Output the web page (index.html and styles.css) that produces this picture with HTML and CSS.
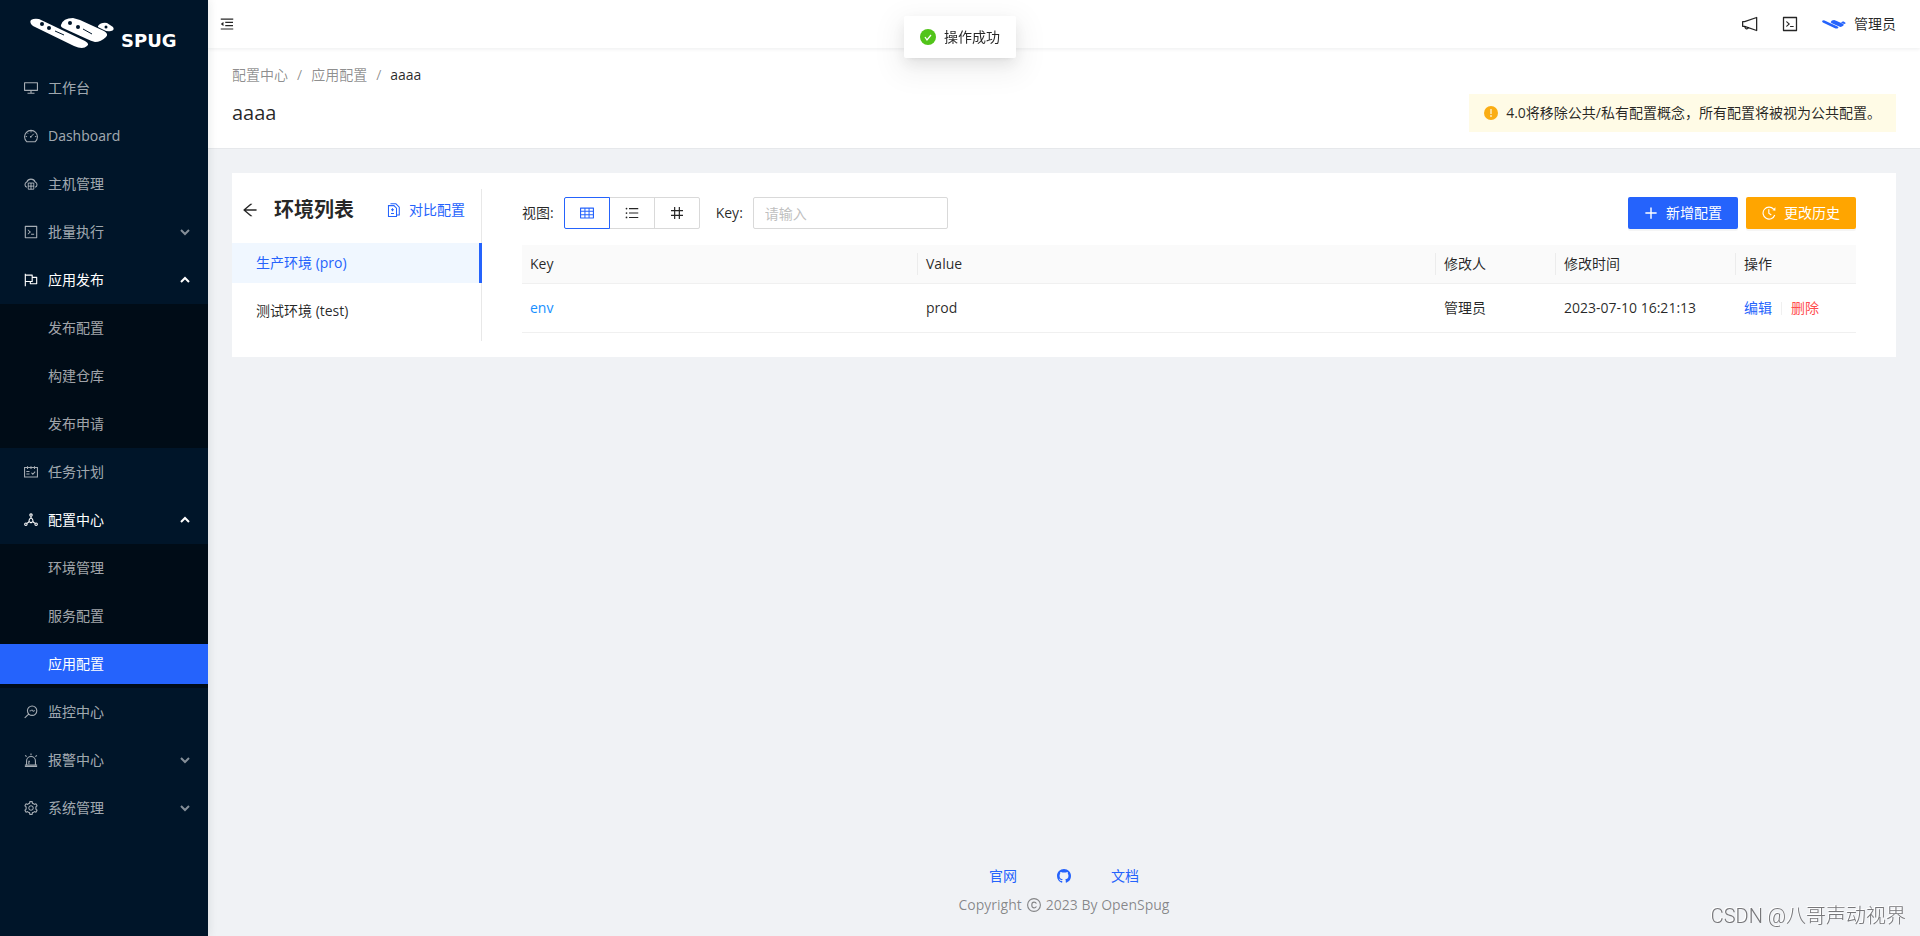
FILE: index.html
```html
<!DOCTYPE html>
<html lang="zh-CN">
<head>
<meta charset="utf-8">
<title>Spug</title>
<link rel="stylesheet" href="styles.css">
</head>
<body>
<svg class="defs" aria-hidden="true">
  <symbol id="fold" viewBox="64 64 896 896"><path d="M400 370h496v72H400zM400 582h496v72H400zM112 160h800v72H112zM112 792h800v72H112zM115 519l157 123c6 4 14 0 14-7V389c0-7-8-12-14-7L115 505a9 9 0 000 14z"/></symbol>
  <symbol id="desktop" viewBox="64 64 896 896"><path d="M928 140H96c-17.700 0-32 14.300-32 32v496c0 17.700 14.300 32 32 32h380v112H304c-8.800 0-16 7.200-16 16v48c0 4.400 3.600 8 8 8h432c4.400 0 8-3.600 8-8v-48c0-8.800-7.200-16-16-16H548V700h380c17.700 0 32-14.300 32-32V172c0-17.700-14.300-32-32-32zm-40 488H136V212h752v416z"/></symbol>
  <symbol id="dashboard" viewBox="64 64 896 896"><g fill="none" stroke="currentColor" stroke-width="68"><path d="M232 866A412 412 0 1 1 792 866Q780 880 760 880H264Q244 880 232 866Z"/><path d="M512 196v90M262 300l58 58M170 548h90M764 548h90M500 560l190-190" stroke-width="60"/></g><circle cx="498" cy="562" r="56"/></symbol>
  <symbol id="cloud" viewBox="64 64 896 896"><g fill="none" stroke="currentColor" stroke-width="68"><path d="M248 724A180 180 0 0 1 244 386A286 286 0 0 1 780 386A180 180 0 0 1 776 724"/><path d="M334 450h356v396H334zM334 648h356M512 450v396" stroke-width="60"/></g></symbol>
  <symbol id="code" viewBox="64 64 896 896"><path d="M516 673c0 4.400 3.400 8 7.500 8h185c4.100 0 7.500-3.600 7.500-8v-48c0-4.400-3.400-8-7.500-8h-185c-4.100 0-7.500 3.600-7.500 8v48zm-194.900 6.100l192-161c3.800-3.200 3.800-9.100 0-12.300l-192-160.900A7.950 7.950 0 00308 351v62.700c0 2.400 1 4.600 2.900 6.100L420.700 512l-109.800 92.200a8.100 8.100 0 00-2.900 6.100V673c0 6.800 7.900 10.500 13.100 6.100zM880 112H144c-17.700 0-32 14.300-32 32v736c0 17.700 14.300 32 32 32h736c17.700 0 32-14.300 32-32V144c0-17.700-14.300-32-32-32zm-40 728H184V184h656v656z"/></symbol>
  <symbol id="flag" viewBox="64 64 896 896"><path d="M880 305H624V192c0-17.700-14.300-32-32-32H184v-40c0-4.400-3.600-8-8-8h-56c-4.400 0-8 3.600-8 8v784c0 4.400 3.600 8 8 8h56c4.400 0 8-3.600 8-8V640h248v113c0 17.700 14.300 32 32 32h416c17.700 0 32-14.300 32-32V337c0-17.700-14.300-32-32-32zM184 568V232h368v336H184zm656 145H504v-73h112c4.400 0 8-3.600 8-8V377h216v336z"/></symbol>
  <symbol id="schedule" viewBox="64 64 896 896"><g fill="none" stroke="currentColor" stroke-width="68"><path d="M100 228h824v600H100zM288 136v180M512 136v180M736 136v180"/><path d="M216 482h200M216 636h200M540 560l88 96 150-170" stroke-width="68"/></g></symbol>
  <symbol id="deploy" viewBox="64 64 896 896"><g fill="none" stroke="currentColor" stroke-width="70"><circle cx="512" cy="196" r="78"/><circle cx="184" cy="786" r="78"/><circle cx="840" cy="786" r="78"/><path d="M512 274v100M512 374Q380 450 376 610L512 690L648 610Q644 450 512 374ZM376 640L246 730M648 640L778 730"/></g></symbol>
  <symbol id="monitor" viewBox="64 64 896 896"><g fill="none" stroke="currentColor" stroke-width="70"><circle cx="584" cy="430" r="300"/><path d="M362 642L110 894"/><path d="M420 440h80l70-70 70 110 60-50h60" stroke-width="62"/></g></symbol>
  <symbol id="alert" viewBox="64 64 896 896"><g fill="none" stroke="currentColor" stroke-width="70"><path d="M228 800V570a284 284 0 0 1 568 0v230M376 770V590h70M120 832h784M120 922h784M512 90v116M140 210l90 90M884 210l-90 90"/></g></symbol>
  <symbol id="setting" viewBox="64 64 896 896"><path d="M924.800 625.700l-65.500-56c3.100-19 4.700-38.400 4.700-57.800s-1.600-38.800-4.700-57.800l65.500-56a32.030 32.030 0 009.300-35.200l-.9-2.600a443.740 443.740 0 00-79.700-137.900l-1.800-2.100a32.120 32.120 0 00-35.100-9.500l-81.300 28.900c-30-24.600-63.500-44-99.700-57.600l-15.700-85a32.050 32.050 0 00-25.800-25.700l-2.700-.5c-52.100-9.400-106.900-9.400-159 0l-2.700.5a32.050 32.050 0 00-25.800 25.700l-15.800 85.400a351.860 351.860 0 00-99 57.400l-81.900-29.100a32 32 0 00-35.100 9.500l-1.800 2.100a446.020 446.020 0 00-79.700 137.900l-.9 2.600c-4.500 12.500-.8 26.500 9.300 35.200l66.300 56.600c-3.100 18.800-4.600 38-4.600 57.100 0 19.200 1.500 38.400 4.600 57.100L99 625.500a32.030 32.030 0 00-9.300 35.200l.9 2.600c18.100 50.400 44.900 96.900 79.700 137.900l1.800 2.100a32.120 32.120 0 0035.100 9.500l81.900-29.100c29.800 24.500 63.100 43.900 99 57.400l15.800 85.400a32.050 32.050 0 0025.800 25.700l2.700.5a449.400 449.400 0 00159 0l2.700-.5a32.050 32.050 0 0025.800-25.700l15.700-85a350 350 0 0099.700-57.600l81.300 28.900a32 32 0 0035.100-9.500l1.800-2.100c34.800-41.100 61.600-87.500 79.700-137.900l.9-2.600c4.500-12.300.8-26.300-9.300-35zM788.300 465.900c2.500 15.100 3.800 30.600 3.800 46.100s-1.300 31-3.800 46.100l-6.600 40.100 74.700 63.900a370.030 370.030 0 01-42.600 73.600L721 702.800l-31.400 25.800c-23.900 19.600-50.500 35-79.300 45.800l-38.100 14.300-17.900 97a377.500 377.500 0 01-85 0l-17.900-97.200-37.800-14.500c-28.500-10.800-55-26.200-78.700-45.700l-31.400-25.900-93.400 33.200c-17-22.900-31.200-47.600-42.600-73.600l75.500-64.500-6.500-40c-2.400-14.900-3.700-30.300-3.700-45.500 0-15.300 1.200-30.600 3.700-45.500l6.500-40-75.500-64.500c11.300-26.100 25.600-50.700 42.600-73.600l93.400 33.200 31.400-25.900c23.700-19.500 50.200-34.900 78.700-45.700l37.900-14.300 17.900-97.200c28.100-3.200 56.800-3.200 85 0l17.900 97 38.100 14.300c28.700 10.800 55.400 26.200 79.300 45.800l31.400 25.800 92.800-32.900c17 22.900 31.200 47.600 42.600 73.600L781.800 426l6.500 39.900z"/><circle cx="512" cy="512" r="144" fill="none" stroke="currentColor" stroke-width="64"/></symbol>
  <symbol id="chevron" viewBox="0 0 10 10"><path d="M1 3l4 4 4-4" fill="none" stroke="currentColor" stroke-width="2"/></symbol>
  <symbol id="notice" viewBox="64 64 896 896"><g fill="none" stroke="currentColor" stroke-width="72" stroke-linejoin="round"><path d="M100 380h110L884 148v728L210 644H100z"/><path d="M236 664a92 92 0 1 0 190 40"/></g></symbol>
  <symbol id="back" viewBox="64 64 896 896"><path d="M872 474H286.900l350.200-304c5.600-4.900 2.200-14-5.200-14h-88.500c-3.900 0-7.600 1.400-10.500 3.900L155 487.800a31.960 31.960 0 000 48.300L535.100 866c1.500 1.300 3.300 2 5.200 2h91.500c7.400 0 10.800-9.200 5.200-14L286.900 550H872c4.400 0 8-3.600 8-8v-60c0-4.400-3.600-8-8-8z"/></symbol>
  <symbol id="diff" viewBox="64 64 896 896"><g fill="none" stroke="currentColor" stroke-width="66"><path d="M158 232h350l164 164v528H158zM284 114h350l216 216v500H700"/><path d="M415 400v190M320 495h190M320 740h190"/></g></symbol>
  <symbol id="table" viewBox="64 64 896 896"><path d="M928 160H96c-17.700 0-32 14.300-32 32v640c0 17.700 14.300 32 32 32h832c17.700 0 32-14.300 32-32V192c0-17.700-14.300-32-32-32zm-40 208H676V232h212v136zm0 224H676V432h212v160zM412 432h200v160H412V432zm200-64H412V232h200v136zm-476 64h212v160H136V432zm0-200h212v136H136V232zm0 424h212v136H136V656zm276 0h200v136H412V656zm476 136H676V656h212v136z"/></symbol>
  <symbol id="list" viewBox="64 64 896 896"><path d="M320 192h592v72H320zM320 476h592v72H320zM320 760h592v72H320z"/><circle cx="160" cy="228" r="56"/><circle cx="160" cy="512" r="56"/><circle cx="160" cy="796" r="56"/></symbol>
  <symbol id="number" viewBox="64 64 896 896"><path d="M128 324h768v76H128zM128 624h768v76H128zM324 128h76v768h-76zM624 128h76v768h-76z"/></symbol>
  <symbol id="plus" viewBox="64 64 896 896"><path d="M466 152h92v720h-92zM152 466h720v92H152z"/></symbol>
  <symbol id="history" viewBox="64 64 896 896"><g fill="none" stroke="currentColor" stroke-width="72"><path d="M810 270A384 384 0 1 0 880 640M500 270v260l160 110"/></g><path d="M920 150v210L730 330z"/></symbol>
  <symbol id="github" viewBox="0 0 16 16"><path d="M8 0C3.580 0 0 3.580 0 8c0 3.540 2.290 6.530 5.470 7.590.4.070.55-.17.55-.38 0-.19-.01-.82-.01-1.490-2.010.37-2.530-.49-2.690-.94-.09-.23-.48-.94-.82-1.130-.28-.15-.68-.52-.01-.53.63-.01 1.080.58 1.230.82.72 1.210 1.870.87 2.330.66.07-.52.28-.87.51-1.070-1.780-.2-3.640-.89-3.640-3.950 0-.87.31-1.590.82-2.150-.08-.2-.36-1.020.08-2.120 0 0 .67-.21 2.200.82.64-.18 1.320-.27 2-.27s1.360.09 2 .27c1.530-1.040 2.200-.82 2.200-.82.44 1.100.16 1.920.08 2.120.51.56.82 1.270.82 2.150 0 3.070-1.870 3.750-3.650 3.950.29.25.54.73.54 1.480 0 1.070-.01 1.930-.01 2.200 0 .21.15.46.55.38A8.010 8.010 0 0016 8c0-4.420-3.580-8-8-8z"/></symbol>
  <symbol id="copyright" viewBox="64 64 896 896"><g fill="none" stroke="currentColor" stroke-width="72"><circle cx="512" cy="512" r="410"/><path d="M662 430C640 350 590 326 516 326C420 326 370 390 370 512S420 698 516 698C590 698 640 664 662 596"/></g></symbol>
  <symbol id="success" viewBox="0 0 16 16"><circle cx="8" cy="8" r="8"/><path d="M5 8l2 3 4-5" fill="none" stroke="#fff" stroke-width="1.300"/></symbol>
  <symbol id="warning" viewBox="0 0 14 14"><circle cx="7" cy="7" r="7"/><path d="M7 3v5M7 9v2" fill="none" stroke="#fffbe6" stroke-width="1.200"/></symbol>
  <symbol id="ships" viewBox="30 18 85 31"><path d="M31 20Q34 18 39 19L85 41Q90 44 87 46Q83 50 74 46L33 26Q29 23 31 20Z"/><path d="M61 25Q63 18 73 18L80 20L104 31Q109 34 106 37Q101 42 95 42Q91 41 87 39L65 29Q60 27 61 25Z"/><path d="M98 26Q101 22 107 23L113 27Q115 30 111 31Q107 32 104 30L98 27Z"/></symbol>
</svg>

<div class="app">
  <aside class="sider">
    <div class="logo">
      <svg class="logo-mark" viewBox="30 18 85 31"><use href="#ships" x="30" y="18" width="85" height="31"/><g fill="#001529"><circle cx="42" cy="24" r="2"/><circle cx="49" cy="28" r="2"/><circle cx="70" cy="23" r="2"/><circle cx="78" cy="27" r="2"/><circle cx="106" cy="27" r="1.500"/></g><path d="M55 31l9 4M83 29l9 5" fill="none" stroke="#001529"/></svg>
      <span class="logo-text">SPUG</span>
    </div>
    <nav class="menu">
      <a class="item" href="#"><svg class="icon"><use href="#desktop"/></svg>工作台</a>
      <a class="item" href="#"><svg class="icon"><use href="#dashboard"/></svg>Dashboard</a>
      <a class="item" href="#"><svg class="icon"><use href="#cloud"/></svg>主机管理</a>
      <button class="item"><svg class="icon"><use href="#code"/></svg>批量执行<svg class="arrow"><use href="#chevron"/></svg></button>
      <button class="item open"><svg class="icon"><use href="#flag"/></svg>应用发布<svg class="arrow"><use href="#chevron"/></svg></button>
      <div class="submenu">
        <a class="item" href="#">发布配置</a>
        <a class="item" href="#">构建仓库</a>
        <a class="item" href="#">发布申请</a>
      </div>
      <a class="item" href="#"><svg class="icon"><use href="#schedule"/></svg>任务计划</a>
      <button class="item open"><svg class="icon"><use href="#deploy"/></svg>配置中心<svg class="arrow"><use href="#chevron"/></svg></button>
      <div class="submenu">
        <a class="item" href="#">环境管理</a>
        <a class="item" href="#">服务配置</a>
        <a class="item selected" href="#">应用配置</a>
      </div>
      <a class="item" href="#"><svg class="icon"><use href="#monitor"/></svg>监控中心</a>
      <button class="item"><svg class="icon"><use href="#alert"/></svg>报警中心<svg class="arrow"><use href="#chevron"/></svg></button>
      <button class="item"><svg class="icon"><use href="#setting"/></svg>系统管理<svg class="arrow"><use href="#chevron"/></svg></button>
    </nav>
  </aside>

  <div class="main">
    <header class="topbar">
      <button class="plain" aria-label="收起菜单"><svg class="icon"><use href="#fold"/></svg></button>
      <div class="top-actions">
        <button class="plain" aria-label="通知"><svg class="icon large"><use href="#notice"/></svg></button>
        <button class="plain" aria-label="终端"><svg class="icon large"><use href="#code"/></svg></button>
        <button class="plain user"><svg class="avatar"><use href="#ships"/></svg>管理员</button>
      </div>
    </header>

    <section class="page-head">
      <nav class="breadcrumb"><a href="#">配置中心</a><span>/</span><a href="#">应用配置</a><span>/</span><b>aaaa</b></nav>
      <div class="title-row">
        <h1>aaaa</h1>
        <div class="notice"><svg class="icon"><use href="#warning"/></svg>4.0将移除公共/私有配置概念，所有配置将被视为公共配置。</div>
      </div>
    </section>

    <main class="card">
      <section class="envs">
        <div class="env-head">
          <button class="plain" aria-label="返回"><svg class="icon large"><use href="#back"/></svg></button>
          <h2>环境列表</h2>
          <button class="plain link"><svg class="icon"><use href="#diff"/></svg>对比配置</button>
        </div>
        <a class="env active" href="#">生产环境 (pro)</a>
        <a class="env" href="#">测试环境 (test)</a>
      </section>

      <section class="configs">
        <div class="toolbar">
          <span class="label">视图:</span>
          <div class="views">
            <label class="view checked"><input type="radio" name="view" aria-label="表格" checked><svg class="icon"><use href="#table"/></svg></label>
            <label class="view"><input type="radio" name="view" aria-label="列表"><svg class="icon"><use href="#list"/></svg></label>
            <label class="view"><input type="radio" name="view" aria-label="文本"><svg class="icon"><use href="#number"/></svg></label>
          </div>
          <label class="label" for="key">Key:</label>
          <input class="field" id="key" type="text" placeholder="请输入">
          <div class="actions">
            <button class="btn"><svg class="icon"><use href="#plus"/></svg>新增配置</button>
            <button class="btn orange"><svg class="icon"><use href="#history"/></svg>更改历史</button>
          </div>
        </div>
        <table class="table">
          <colgroup><col class="c-key"><col><col class="c-user"><col class="c-time"><col class="c-ops"></colgroup>
          <thead><tr><th>Key</th><th>Value</th><th>修改人</th><th>修改时间</th><th>操作</th></tr></thead>
          <tbody><tr><td class="key">env</td><td>prod</td><td>管理员</td><td>2023-07-10 16:21:13</td><td><div class="ops"><button class="plain link">编辑</button><i></i><button class="plain danger">删除</button></div></td></tr></tbody>
        </table>
      </section>
    </main>

    <footer class="footer">
      <div class="foot-links"><a href="#">官网</a><a href="#" aria-label="GitHub"><svg class="icon"><use href="#github"/></svg></a><a href="#">文档</a></div>
      <div class="copy">Copyright <svg class="icon"><use href="#copyright"/></svg> 2023 By OpenSpug</div>
    </footer>
  </div>
</div>
<div class="toast" role="status"><svg class="icon large"><use href="#success"/></svg>操作成功</div>
<div class="watermark">CSDN @八哥声动视界</div>
</body>
</html>
```

FILE: styles.css
```css
* { box-sizing: border-box; }
body {
  margin: 0;
  font: 14px/22px "Open Sans", "Noto Sans CJK SC", sans-serif;
  color: rgba(0, 0, 0, .85);
  background: #f0f2f5;
}
a { color: #2563fc; text-decoration: none; }
button { font: inherit; color: inherit; border: 0; background: none; cursor: pointer; }
h1, h2 { margin: 0; }
svg { fill: currentColor; flex: none; }
.defs { position: absolute; width: 0; height: 0; }
.icon { width: 14px; height: 14px; }
.icon.large { width: 16px; height: 16px; }
.plain { display: inline-flex; align-items: center; padding: 0; }
.link { color: #2563fc; }
.danger { color: #ff4d4f; }

.app { display: flex; min-height: 100vh; }
.sider {
  position: relative;
  z-index: 1;
  width: 208px;
  flex: none;
  background: #001529;
  box-shadow: 2px 0 8px rgba(29, 35, 41, .08);
}
.logo { display: flex; align-items: flex-end; gap: 6px; height: 64px; padding: 0 30px 15px; color: #fff; }
.logo-mark { width: 85px; height: 31px; }
.logo-text { font: bold 18px/16px "DejaVu Sans", sans-serif; }
.item {
  display: flex;
  align-items: center;
  gap: 10px;
  width: 100%;
  height: 40px;
  margin: 4px 0;
  padding: 0 18px 0 24px;
  color: rgba(255, 255, 255, .65);
}
.menu { display: flow-root; }
.menu > .item { margin: 4px 0 8px; }
.menu > .item.open { margin-bottom: 4px; color: #fff; }
.arrow { width: 10px; height: 10px; margin-left: auto; opacity: .8; }
.open .arrow { transform: rotate(180deg); opacity: 1; }
.submenu { display: flow-root; background: #000c17; }
.submenu .item { padding-left: 48px; margin: 4px 0 8px; }
.submenu .item:last-child { margin-bottom: 4px; }
.submenu .selected { color: #fff; background: #2563fc; }

.main { display: flex; flex-direction: column; flex: 1; min-width: 0; }
.topbar {
  position: relative;
  display: flex;
  align-items: center;
  justify-content: space-between;
  height: 48px;
  padding: 0 24px 0 12px;
  background: #fff;
  box-shadow: 0 1px 4px rgba(0, 21, 41, .08);
}
.top-actions { display: flex; gap: 24px; }
.user { gap: 8px; }
.avatar { width: 24px; height: 9px; color: #2563fc; }

.page-head { padding: 16px 24px; background: #fff; border-bottom: 1px solid #e6e8eb; }
.breadcrumb { display: flex; gap: 9px; color: rgba(0, 0, 0, .45); }
.breadcrumb a { color: inherit; }
.breadcrumb b { font-weight: 400; color: rgba(0, 0, 0, .85); }
.title-row { display: flex; align-items: center; justify-content: space-between; padding-top: 8px; }
h1 { font-size: 20px; line-height: 32px; font-weight: 400; }
.notice { display: flex; align-items: center; gap: 8px; padding: 8px 15px; background: #fffbe6; }
.notice .icon { color: #faad14; }

.card { display: flex; margin: 24px; padding: 16px 0; background: #fff; }
.envs { width: 250px; padding-bottom: 2px; border-right: 1px solid #e8e8e8; }
.env-head { display: flex; align-items: center; height: 42px; margin-bottom: 12px; padding: 0 16px 0 10px; }
.env-head h2 { margin-left: 16px; font-size: 20px; line-height: 28px; }
.env-head .link { gap: 8px; margin-left: auto; }
.env { display: flex; align-items: center; height: 40px; margin: 0 -1px 8px 0; padding-left: 24px; color: inherit; }
.env.active { color: #2563fc; background: #f0f7ff; border-right: 3px solid #2563fc; }
.configs { flex: 1; min-width: 0; padding: 8px 40px 0; }
.toolbar { display: flex; align-items: center; margin-bottom: 16px; }
.label { margin-right: 10px; }
.views { display: flex; margin-right: 16px; }
.view {
  display: grid;
  place-items: center;
  width: 46px;
  height: 32px;
  margin-right: -1px;
  border: 1px solid #d9d9d9;
}
.view:first-child { border-radius: 2px 0 0 2px; }
.view:last-child { margin-right: 0; border-radius: 0 2px 2px 0; }
.view input { position: absolute; opacity: 0; pointer-events: none; }
.view.checked { position: relative; color: #2563fc; border-color: #2563fc; }
.field { width: 195px; height: 32px; padding: 4px 11px; font: inherit; border: 1px solid #d9d9d9; border-radius: 2px; }
.field::placeholder { color: #bfbfbf; }
.actions { display: flex; gap: 8px; margin-left: auto; }
.btn {
  display: flex;
  align-items: center;
  gap: 8px;
  height: 32px;
  padding: 0 16px;
  color: #fff;
  background: #2563fc;
  border-radius: 2px;
  box-shadow: 0 2px 0 rgba(0, 0, 0, .04);
}
.orange { background: #ffa500; }

.table { width: 100%; table-layout: fixed; border-collapse: separate; border-spacing: 0; text-align: left; }
.c-key { width: 396px; }
.c-user, .c-ops { width: 120px; }
.c-time { width: 180px; }
.table th { height: 39px; padding: 8px; font-weight: 400; background: #fafafa; border-bottom: 1px solid #f0f0f0; }
.table th:not(:last-child) {
  background: linear-gradient(#ececec, #ececec) right center / 1px 22px no-repeat #fafafa;
}
.table td { height: 49px; padding: 8px; border-bottom: 1px solid #f0f0f0; }
.table .key { color: #1890ff; }
.ops { display: flex; align-items: center; gap: 9px; }
.ops i { width: 1px; height: 13px; background: #f0f0f0; }

.footer { margin-top: auto; padding: 0 0 20px; text-align: center; }
.foot-links { display: flex; justify-content: center; gap: 40px; margin-bottom: 7px; }
.foot-links a { display: flex; align-items: center; }
.copy { display: flex; align-items: center; justify-content: center; gap: 5px; color: rgba(0, 0, 0, .45); }

.toast {
  position: fixed;
  z-index: 2;
  top: 16px;
  left: 50%;
  transform: translateX(-50%);
  display: flex;
  align-items: center;
  gap: 8px;
  padding: 10px 16px;
  color: rgba(0, 0, 0, .85);
  background: #fff;
  border-radius: 2px;
  box-shadow: 0 3px 6px -4px rgba(0, 0, 0, .12), 0 6px 16px rgba(0, 0, 0, .08), 0 9px 28px 8px rgba(0, 0, 0, .05);
}
.toast .icon { color: #52c41a; }
.watermark {
  position: fixed;
  right: 14px;
  bottom: 7px;
  font: 20px/26px Roboto, "Noto Sans CJK SC", sans-serif;
  font-weight: 300;
  color: #77777a;
  text-shadow: -1px -1px 0 #fff;
}
```
